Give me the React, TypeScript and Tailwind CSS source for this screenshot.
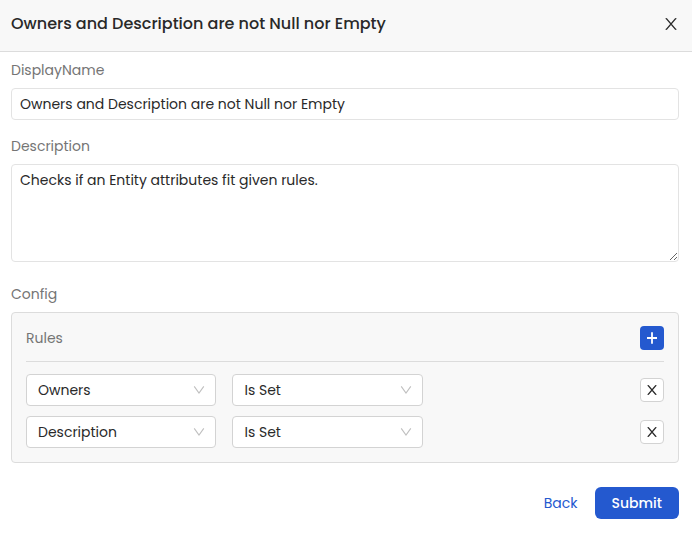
import { useState } from "react";
import type { ReactNode } from "react";

interface Rule {
  id: number;
  field: string;
  condition: string;
}

interface RuleSelectProps {
  label: string;
  value: string;
  options: string[];
  onChange: (value: string) => void;
}

const FIELDS = ["Owners", "Description", "Tags", "Tier"];
const CONDITIONS = ["Is Set", "Is Not Set"];

const labelClass = "block pb-[7px] leading-[22px] text-[#757575]";

function CloseIcon({ className = "" }: { className?: string }) {
  return (
    <svg className={className} viewBox="0 0 12 12" fill="none" stroke="currentColor" strokeWidth="1.4" aria-hidden="true">
      <path d="M1.4 0.6 10.6 11.4M10.6 0.6 1.4 11.4" />
      <path d="M0.5 0.6H2M10 0.6H11.5M0.5 11.4H2M10 11.4H11.5" strokeWidth="0.8" />
    </svg>
  );
}

function RuleSelect({ label, value, options, onChange }: RuleSelectProps) {
  return (
    <div className="relative">
      <select
        aria-label={label}
        value={value}
        onChange={(e) => onChange(e.target.value)}
        className="block h-8 w-full appearance-none rounded border border-[#d3d3d3] bg-white px-[11px] text-sm text-[#292929] outline-none focus:border-[#2459cf]"
      >
        {options.map((option) => (
          <option key={option}>{option}</option>
        ))}
      </select>
      <svg
        className="pointer-events-none absolute top-2.5 right-[11px] h-3 w-3"
        viewBox="0 0 12 12"
        fill="none"
        stroke="#bfbfbf"
        strokeWidth="1.1"
        aria-hidden="true"
      >
        <path d="M1.2 2.4 6 9 10.8 2.4" />
      </svg>
    </div>
  );
}

function Field({ id, label, children }: { id: string; label: string; children: ReactNode }) {
  return (
    <div>
      <label htmlFor={id} className={labelClass}>
        {label}
      </label>
      {children}
    </div>
  );
}

export default function App() {
  const [name, setName] = useState("Owners and Description are not Null nor Empty");
  const [description, setDescription] = useState("Checks if an Entity attributes fit given rules.");
  const [rules, setRules] = useState<Rule[]>([
    { id: 1, field: "Owners", condition: "Is Set" },
    { id: 2, field: "Description", condition: "Is Set" },
  ]);

  const addRule = () => setRules([...rules, { id: Date.now(), field: "Owners", condition: "Is Set" }]);
  const removeRule = (id: number) => setRules(rules.filter((rule) => rule.id !== id));
  const updateRule = (id: number, patch: Partial<Rule>) =>
    setRules(rules.map((rule) => (rule.id === id ? { ...rule, ...patch } : rule)));

  return (
    <div className="min-h-screen bg-white font-['Poppins','Inter',sans-serif] text-sm text-[#292929]">
      <header className="flex items-center justify-between border-b border-[#dcdcdc] bg-[#f8f8f8] pt-3 pr-[15px] pb-[15px] pl-[11px]">
        <h1 className="text-base leading-6 font-medium">Owners and Description are not Null nor Empty</h1>
        <button type="button" aria-label="Close" className="cursor-pointer">
          <CloseIcon className="h-3 w-3" />
        </button>
      </header>

      <form className="pt-[7px] pr-[13px] pb-5 pl-[11px]" onSubmit={(e) => e.preventDefault()}>
        <div className="flex flex-col gap-[15px]">
          <Field id="displayName" label="DisplayName">
            <input
              id="displayName"
              type="text"
              value={name}
              onChange={(e) => setName(e.target.value)}
              className="block h-8 w-full rounded border border-[#e3e3e3] px-2 outline-none focus:border-[#2459cf]"
            />
          </Field>
          <Field id="description" label="Description">
            <textarea
              id="description"
              value={description}
              onChange={(e) => setDescription(e.target.value)}
              className="block h-[98px] w-full resize-y rounded border border-[#e3e3e3] px-2 py-1 leading-[22px] outline-none focus:border-[#2459cf]"
            />
          </Field>
        </div>

        <fieldset className="mt-[21px]">
          <legend className={labelClass}>Config</legend>
          <div className="rounded border border-[#dcdcdc] bg-[#f8f8f8] p-3.5 pt-[13px]">
            <div className="flex items-center justify-between border-b border-[#dcdcdc] pb-[11px]">
              <span className="leading-[22px] text-[#757575]">Rules</span>
              <button
                type="button"
                aria-label="Add rule"
                onClick={addRule}
                className="flex h-6 w-6 cursor-pointer items-center justify-center rounded bg-[#2459cf] text-white"
              >
                <svg className="h-3 w-3" viewBox="0 0 12 12" fill="none" stroke="currentColor" strokeWidth="1.8" aria-hidden="true">
                  <path d="M6 0.2V11.8M1 6H11" />
                </svg>
              </button>
            </div>

            <ul className="mt-3 flex flex-col gap-2.5">
              {rules.map((rule) => (
                <li key={rule.id} className="grid grid-cols-[11fr_11fr_13fr] items-center gap-4">
                  <RuleSelect
                    label="Field"
                    value={rule.field}
                    options={FIELDS}
                    onChange={(field) => updateRule(rule.id, { field })}
                  />
                  <RuleSelect
                    label="Condition"
                    value={rule.condition}
                    options={CONDITIONS}
                    onChange={(condition) => updateRule(rule.id, { condition })}
                  />
                  <button
                    type="button"
                    aria-label="Remove rule"
                    onClick={() => removeRule(rule.id)}
                    className="flex h-6 w-6 cursor-pointer items-center justify-center justify-self-end rounded border border-[#d3d3d3] bg-white"
                  >
                    <CloseIcon className="h-2.5 w-2.5" />
                  </button>
                </li>
              ))}
            </ul>
          </div>
        </fieldset>

        <div className="mt-6 flex justify-end">
          <button type="button" className="h-8 cursor-pointer px-[17px] text-[#2459cf]">
            Back
          </button>
          <button type="submit" className="h-8 cursor-pointer rounded-md bg-[#2459cf] px-[17px] font-medium text-white">
            Submit
          </button>
        </div>
      </form>
    </div>
  );
}
